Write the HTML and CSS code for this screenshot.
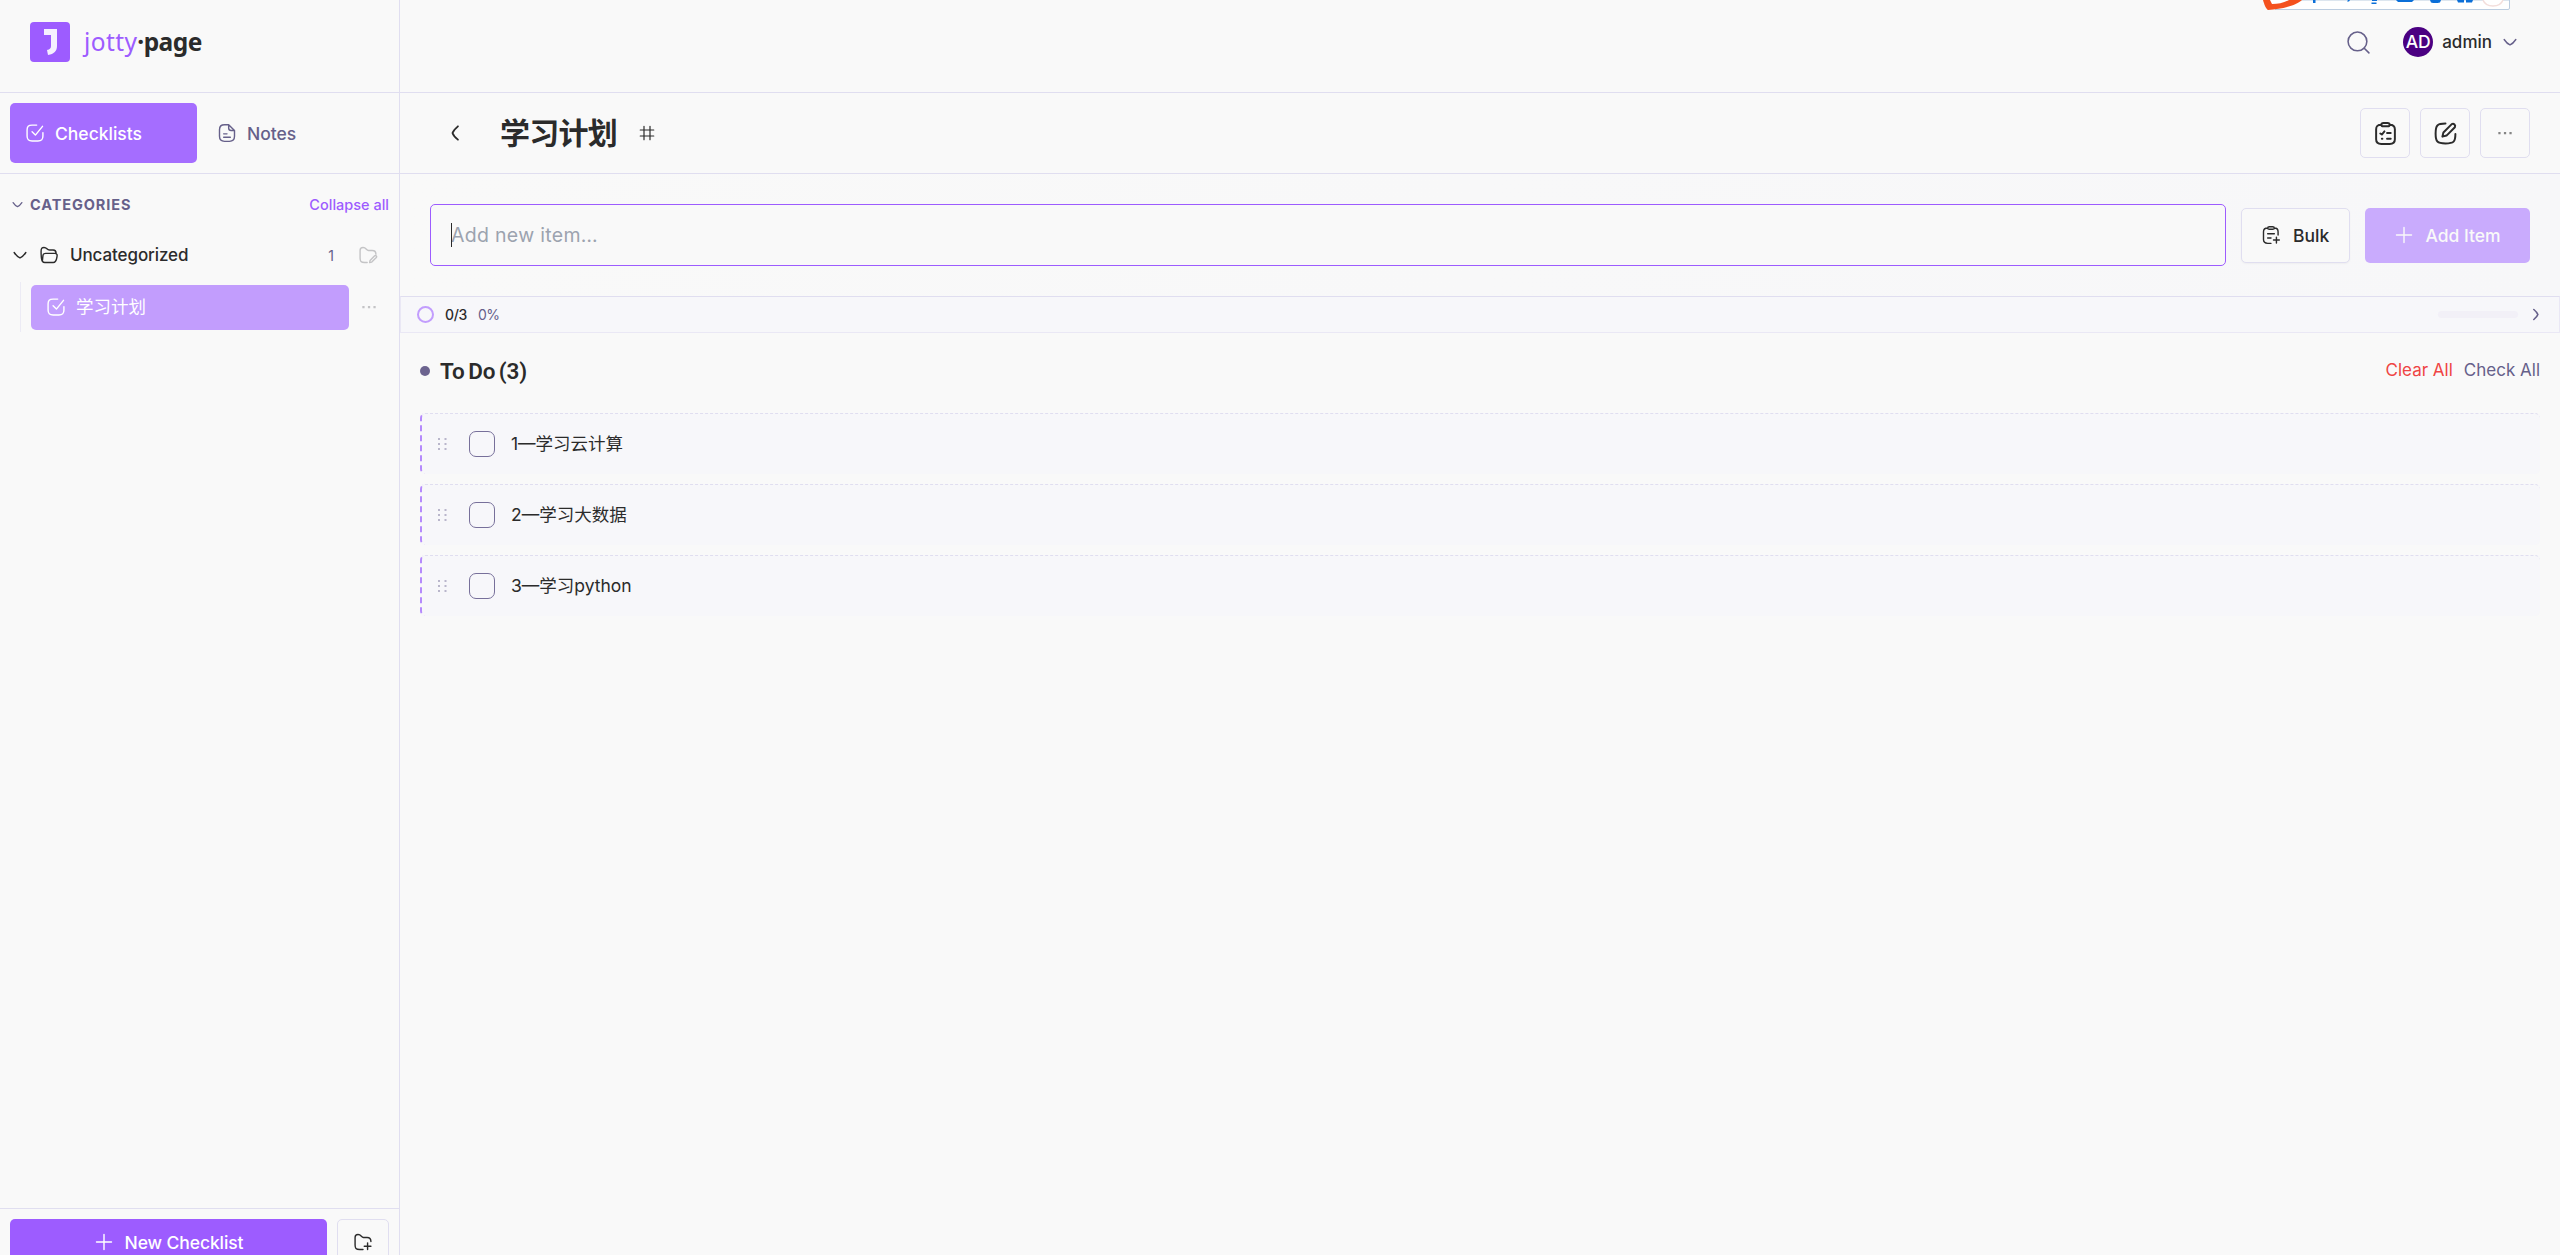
FILE: index.html
```html
<!DOCTYPE html>
<html lang="en">
<head>
  <meta charset="UTF-8" />
  <meta name="viewport" content="width=device-width, initial-scale=1.0" />
  <title>jotty·page</title>
  <link rel="stylesheet" href="styles.css">
</head>
<body>

  <!-- shared icons -->
  <svg width="0" height="0" class="sprite">
    <symbol id="check-square" viewBox="0 0 24 24">
      <path d="M14 2.500H8.500C4 2.500 2.500 4 2.500 8.500v7c0 4.500 1.500 6 6 6h7c4.500 0 6-1.500 6-6v-4M8.500 10.500l4 4L21 4" />
    </symbol>
    <symbol id="chevron-down" viewBox="0 0 24 24">
      <path d="M5 9c2 3 4.500 5.500 7 6.500C14.500 14.500 17 12 19 9" />
    </symbol>
    <symbol id="plus" viewBox="0 0 24 24">
      <path d="M12 3v18M3 12h18" />
    </symbol>
    <symbol id="dots" viewBox="0 0 24 24">
      <path class="solid" d="M4 10.700h2.700v2.700H4zM10.700 10.700h2.700v2.700h-2.700zM17.300 10.700H20v2.700h-2.700z" />
    </symbol>
    <symbol id="grip" viewBox="0 0 20 20">
      <path class="solid" d="M5 4h2v2H5zM11.500 4h2v2h-2zM5 9h2v2H5zM11.500 9h2v2h-2zM5 14h2v2H5zM11.500 14h2v2h-2z" />
    </symbol>
  </svg>

  <div class="app">
    <aside class="sidebar">
      <div class="brand">
        <svg class="brand-mark" width="40" height="40" viewBox="0 0 40 40">
          <rect width="40" height="40" rx="4" fill="#9d5cff" />
          <path d="M14 7h13v17c0 5-3 8-9 9l-1-5c3-.500 4-2 4-4V13h-7z" fill="#f5f0ff" />
        </svg>
        <div class="brand-name"><span class="brand-jotty">jotty</span><span class="brand-page">·page</span></div>
      </div>

      <div class="tabs">
        <button class="tab active"><svg class="icon"><use href="#check-square" /></svg><span>Checklists</span></button>
        <button class="tab">
          <svg class="icon" viewBox="0 0 24 24"><path d="M14 2H9C5 2 3 3.500 3 8v8c0 4.500 2 6 6 6h6c4 0 6-1.500 6-6V9zM14 2v4c0 2 1 3 3 3h4M8 13h4M8 17h8" /></svg>
          <span>Notes</span>
        </button>
      </div>

      <div class="categories">
        <div class="categories-head">
          <svg class="icon tiny"><use href="#chevron-down" /></svg>
          <h2>CATEGORIES</h2>
          <a class="collapse">Collapse all</a>
        </div>

        <div class="category">
          <svg class="icon small"><use href="#chevron-down" /></svg>
          <svg class="icon folder" viewBox="0 0 24 24"><path d="M4 19.500C2.500 17 2.500 13 2.500 7.500c0-3 .5-4.500 3.500-4.500 4 0 3 3 6.500 3H17c2.500 0 3.500 1.500 3.500 4M4 19.500c.5-3 .5-7 1-8 .5-1.300 1.500-1.500 3-1.500h11c3 0 3 2 2.500 4.500C21 18 20.500 21 17 21H7c-1.500 0-2.300-.5-3-1.500z" /></svg>
          <span class="category-name">Uncategorized</span>
          <span class="category-count">1</span>
          <svg class="icon faded" viewBox="0 0 24 24"><path d="M11 21H8c-4.500 0-5.500-1.500-5.500-5.500V6.500C2.500 4 3.500 3 6 3c4 0 4 3.500 6.500 3.500H17c3.500 0 4.500 1.500 4.500 4.500M14 21l.5-2.500 5.500-5.500c1.500-1 3 .5 2 2L16.500 20.500z" /></svg>
        </div>

        <div class="category-items">
          <div class="list-link"><svg class="icon"><use href="#check-square" /></svg><span>学习计划</span></div>
          <svg class="icon faded more"><use href="#dots" /></svg>
        </div>
      </div>

      <div class="sidebar-footer">
        <button class="new-btn"><svg class="icon"><use href="#plus" /></svg><span>New Checklist</span></button>
        <button class="folder-btn">
          <svg class="icon" viewBox="0 0 24 24"><path d="M12 21H8c-4.500 0-5.500-1.500-5.500-5.500V6.500C2.500 4 3.500 3 6 3c4 0 4 3.500 6.500 3.500H17c3.500 0 4.500 1.500 4.500 5M17.500 13v8M13.500 17h8" /></svg>
        </button>
      </div>
    </aside>

    <main class="main">
      <header class="topbar">
        <svg class="icon search" viewBox="0 0 24 24"><circle cx="11" cy="11" r="9" /><path d="M17.500 17.500L22 22" /></svg>
        <div class="user">
          <div class="avatar">AD</div>
          <span class="user-name">admin</span>
          <svg class="icon small"><use href="#chevron-down" /></svg>
        </div>
      </header>

      <div class="titlebar">
        <svg class="icon back" viewBox="0 0 24 24"><path d="M15.500 4C12.500 6.500 10 9 9 12c1 3 3.500 5.500 6.500 8" /></svg>
        <h1>学习计划</h1>
        <svg class="icon hash" viewBox="0 0 24 24"><path d="M8 3v18M16 3v18M3 8h18M3 16h18" /></svg>
        <div class="title-actions">
          <button class="icon-btn">
            <svg class="icon big" viewBox="0 0 24 24"><path d="M8 3.500C4.500 3.500 3 5 3 8v9.500C3 21 4.500 22 8 22h8c3.500 0 5-1 5-4.500V8c0-3-1.500-4.500-5-4.500M8 3.500C8 2 9 2 10 2h4c1 0 2 0 2 1.500S15 5 14 5h-4C9 5 8 5 8 3.500zM7 12l1.500 1 2.500-3M13.500 11.500H17M8.500 17H9M13.500 17H17" /></svg>
          </button>
          <button class="icon-btn">
            <svg class="icon big" viewBox="0 0 24 24"><path d="M12 2.500C4 2.500 2.500 4 2.500 12S4 21.500 12 21.500s9.500-1.500 9.500-9M9 15l1-4 8-8c2-1 4 1 3 3l-8 8z" /></svg>
          </button>
          <button class="icon-btn muted"><svg class="icon"><use href="#dots" /></svg></button>
        </div>
      </div>

      <div class="add-row">
        <div class="add-field">
          <input type="text" placeholder="Add new item…" />
          <span class="caret"></span>
        </div>
        <button class="bulk-btn">
          <svg class="icon" viewBox="0 0 24 24"><path d="M8 3.500C4 3.500 3 5 3 8v9.500C3 21 4.500 22 8 22h4M16 3.500c3.500 0 4.500 1.500 4.500 4.500v4M8 3.500C8 2 9 2 10 2h4c1 0 2 0 2 1.500S15 5 14 5h-4C9 5 8 5 8 3.500zM8 10.500h8M8 15.500h4M18.500 14.500v7M15 18h7" /></svg>
          <span>Bulk</span>
        </button>
        <button class="add-btn"><svg class="icon"><use href="#plus" /></svg><span>Add Item</span></button>
      </div>

      <div class="progress">
        <span class="ring"></span>
        <span class="progress-count">0/3</span>
        <span class="progress-percent">0%</span>
        <span class="progress-track"></span>
        <svg class="icon next" viewBox="0 0 24 24"><path d="M8.500 4c3 2.500 5.500 5 6.500 8-1 3-3.500 5.500-6.500 8" /></svg>
      </div>

      <section class="todo">
        <div class="todo-head">
          <span class="bullet"></span>
          <h3>To Do (3)</h3>
          <a class="clear">Clear All</a>
          <a class="check">Check All</a>
        </div>
        <ul class="items">
          <li class="item"><svg class="grip"><use href="#grip" /></svg><span class="checkbox"></span><span class="label">1—学习云计算</span></li>
          <li class="item"><svg class="grip"><use href="#grip" /></svg><span class="checkbox"></span><span class="label">2—学习大数据</span></li>
          <li class="item"><svg class="grip"><use href="#grip" /></svg><span class="checkbox"></span><span class="label">3—学习python</span></li>
        </ul>
      </section>
    </main>
  </div>

  <!-- floating input method toolbar, cut by the window edge -->
  <svg class="ime" width="252" height="12" viewBox="0 0 252 12">
    <path d="M8 0H246.500V8q0 1.500-1.500 1.500H12" fill="#fff" stroke="#bccde0" />
    <path d="M0 0h39C34 5 20 9 5 10 3 9 1 4 0 0z" fill="#f4511e" />
    <path d="M7 0h19c-5 3-11 4-17 4z" fill="#fff" />
    <path d="M50 0h2.500v3H50zM85 0h2l-1 1.500h-2zM109 0h5v1h-5zM108.500 2.500h5V4h-5zM133 0h18l-2 2h-14zM167 0h11l-1 2.500q-5 1-9 0zM194 0h7v2.500h-6zM203 0h7l-1 2.500h-6z" fill="#0b6fd8" />
    <path d="M220 0c3 8 17 8 20 0" fill="#fff" stroke="#f3dedb" stroke-width="1.500" />
  </svg>

</body>
</html>
```

FILE: styles.css
```css
* {
  box-sizing: border-box;
}

body {
  margin: 0;
  height: 1255px;
  overflow: hidden;
  background-color: #f9f9f9;
  color: #2b2b2b;
  font-family: Inter, 'Noto Sans CJK SC', sans-serif;
  font-size: 17.5px;
  line-height: 25px;
}

h1, h2, h3, ul {
  margin: 0;
  padding: 0;
}

button {
  display: flex;
  align-items: center;
  border: none;
  border-radius: 5px;
  background: none;
  padding: 0;
  color: inherit;
  font: inherit;
  font-weight: 500;
}

span, a {
  white-space: nowrap;
}

.sprite {
  position: absolute;
}

.icon {
  width: 20px;
  height: 20px;
  flex-shrink: 0;
  fill: none;
  stroke: currentColor;
  stroke-width: 1.7;
  stroke-linecap: round;
  stroke-linejoin: round;
}

.icon.tiny {
  width: 15px;
  height: 15px;
  stroke-width: 2;
}

.icon.small {
  width: 20px;
  height: 20px;
}

.icon.big {
  width: 25px;
  height: 25px;
  stroke-width: 1.9;
}

.solid {
  fill: currentColor;
  stroke: none;
}

.app {
  display: flex;
  height: 1255px;
}

/* sidebar */

.sidebar {
  width: 400px;
  flex-shrink: 0;
  display: flex;
  flex-direction: column;
  border-right: 1px solid #e0def0;
}

.brand {
  height: 93px;
  display: flex;
  align-items: flex-start;
  padding: 22px 30px 0;
  gap: 14px;
  border-bottom: 1px solid #e0def0;
}

.brand-name {
  font-family: 'Noto Sans', sans-serif;
  font-size: 24.5px;
  line-height: 40px;
}

.brand-jotty {
  color: #9d5cff;
  letter-spacing: 0.4px;
}

.brand-page {
  font-weight: 700;
  letter-spacing: -0.55px;
}

.tabs {
  height: 81px;
  display: flex;
  padding: 10px;
  gap: 5px;
  border-bottom: 1px solid #e0def0;
}

.tab {
  width: 187px;
  height: 60px;
  padding-left: 15px;
  gap: 10px;
  color: #66608a;
}

.tab.active {
  background-color: #a56dff;
  color: #fff;
}

.categories {
  flex: 1;
}

.categories-head {
  display: flex;
  align-items: center;
  height: 61px;
  padding: 0 10px;
  font-size: 15px;
}

.categories-head .icon {
  color: #66608a;
}

.categories-head h2 {
  flex: 1;
  padding-left: 5px;
  color: #66608a;
  font-size: 14.5px;
  font-weight: 700;
  letter-spacing: 0.9px;
}

.collapse {
  color: #9d5cff;
  font-size: 14.5px;
  font-weight: 500;
}

.category {
  height: 40px;
  display: flex;
  align-items: center;
  padding: 0 21px 0 10px;
}

.folder {
  margin-left: 9px;
}

.category-name {
  flex: 1;
  padding-left: 11px;
  font-size: 17px;
  font-weight: 500;
  letter-spacing: -0.1px;
}

.category-count {
  margin-right: 24px;
  color: #66608a;
  font-size: 14px;
}

.faded {
  color: #c4c4c6;
}

.category-items {
  display: flex;
  align-items: center;
  height: 50px;
  margin: 7px 20px 0;
  padding-left: 10px;
  border-left: 1px solid #ecebf5;
}

.list-link {
  width: 318px;
  height: 45px;
  display: flex;
  align-items: center;
  gap: 10px;
  padding-left: 15px;
  border-radius: 5px;
  background-color: #c29dfd;
  color: #fff;
}

.list-link span {
  padding-bottom: 2px;
}

.more {
  margin-left: 10px;
}

.sidebar-footer {
  height: 47px;
  display: flex;
  gap: 10px;
  padding: 10px;
  border-top: 1px solid #e0def0;
}

.new-btn {
  width: 317px;
  height: 46px;
  justify-content: center;
  gap: 11px;
  background-color: #9d5cff;
  color: #fff;
  letter-spacing: -0.1px;
}

.folder-btn {
  width: 52px;
  height: 46px;
  justify-content: center;
  border: 1px solid #e0def0;
}

/* main column */

.main {
  flex: 1;
  min-width: 0;
}

.topbar {
  height: 93px;
  display: flex;
  justify-content: flex-end;
  align-items: flex-start;
  padding: 27px 40px 0 0;
  border-bottom: 1px solid #e0def0;
  color: #66608a;
}

.search {
  width: 25px;
  height: 25px;
  margin: 3px 32px 0 0;
  stroke-width: 1.5;
}

.user {
  display: flex;
  align-items: center;
  height: 30px;
}

.avatar {
  width: 30px;
  height: 30px;
  border-radius: 50%;
  background-color: #4b0082;
  color: #fff;
  font-size: 17.5px;
  font-weight: 500;
  line-height: 30px;
  text-align: center;
}

.user-name {
  padding: 0 8px 0 9px;
  color: #2b2b2b;
  font-size: 17px;
  font-weight: 500;
}

.titlebar {
  height: 81px;
  display: flex;
  align-items: center;
  padding: 0 30px 0 45px;
  border-bottom: 1px solid #e0def0;
}

.back {
  stroke-width: 2.2;
}

.titlebar h1 {
  padding-left: 35px;
  font-size: 30px;
  font-weight: 700;
  line-height: 40px;
  letter-spacing: -0.75px;
}

.hash {
  width: 18px;
  height: 18px;
  margin-left: 21px;
  stroke-width: 1.6;
}

.title-actions {
  margin-left: auto;
  display: flex;
  gap: 10px;
}

.icon-btn {
  width: 50px;
  height: 50px;
  justify-content: center;
  border: 1px solid #e0def0;
}

.icon-btn.muted {
  color: #858585;
}

.add-row {
  height: 122px;
  display: flex;
  align-items: center;
  gap: 15px;
  padding: 0 30px;
  background: linear-gradient(90deg, #f9f9f9, #f7f7f9);
}

.add-field {
  position: relative;
  flex: 1;
}

.add-field input {
  display: block;
  width: 100%;
  height: 62px;
  padding: 0 20px;
  border: 1px solid #9d5cff;
  border-radius: 5px;
  background-color: #f9f9f9;
  font-family: Inter, sans-serif;
  font-size: 19.5px;
  letter-spacing: 0.3px;
  outline: none;
}

.add-field input::placeholder {
  color: #9ca3af;
  font-weight: 400;
}

.caret {
  position: absolute;
  left: 21px;
  top: 19px;
  width: 1px;
  height: 24px;
  background-color: #2b2b2b;
}

.bulk-btn {
  width: 109px;
  height: 55px;
  padding-left: 19px;
  gap: 12px;
  border: 1px solid #e0def0;
  background-color: #f9f9f9;
  box-shadow: 0 1px 2px rgba(0, 0, 0, 0.04);
}

.add-btn {
  width: 165px;
  height: 55px;
  justify-content: center;
  gap: 11px;
  background-color: #c9abfd;
  color: #f9f9f9;
}

.progress {
  height: 37px;
  display: flex;
  align-items: center;
  padding: 0 14px 0 16px;
  border: 1px solid #eae8f5;
  border-top-color: #e0def0;
  background-color: #f7f7fa;
  font-size: 15px;
}

.ring {
  width: 17px;
  height: 17px;
  border: 2px solid #c29dfd;
  border-radius: 50%;
}

.progress-count {
  padding: 0 11px;
  font-size: 14px;
  font-weight: 500;
  letter-spacing: -0.3px;
}

.progress-percent {
  color: #66608a;
  font-size: 14px;
  letter-spacing: -0.8px;
}

.progress-track {
  width: 80px;
  height: 7px;
  margin: 0 9px 0 auto;
  border-radius: 4px;
  background-color: #f2f0f7;
}

.next {
  width: 18px;
  height: 15px;
  color: #66608a;
  stroke-width: 2.6;
}

.todo {
  padding: 20px;
}

.todo-head {
  display: flex;
  align-items: center;
  height: 35px;
  margin-bottom: 25px;
}

.bullet {
  width: 10px;
  height: 10px;
  border-radius: 50%;
  background-color: #6c648f;
}

.todo-head h3 {
  flex: 1;
  padding: 1px 0 0 10px;
  font-family: Roboto, sans-serif;
  font-size: 22.5px;
  font-weight: 600;
  letter-spacing: -0.1px;
  word-spacing: -2px;
}

.clear {
  margin-right: 11px;
  color: #ef4444;
  font-size: 17px;
}

.check {
  color: #66608a;
  font-size: 17px;
}

.items {
  display: flex;
  flex-direction: column;
  gap: 10px;
  list-style: none;
}

.item {
  height: 61px;
  display: flex;
  align-items: center;
  border-top: 1px dashed #e0def0;
  border-left: 2px dashed #b58afc;
  border-radius: 5px;
  background-color: #f7f7fa;
}

.grip {
  width: 20px;
  height: 20px;
  margin-left: 11px;
  color: #b9b6cb;
}

.checkbox {
  width: 26px;
  height: 26px;
  margin: 0 16px;
  border: 1.5px solid #77709a;
  border-radius: 7px;
}

.label {
  padding-bottom: 1px;
}

.ime {
  position: absolute;
  left: 2263px;
  top: 0;
}
```
